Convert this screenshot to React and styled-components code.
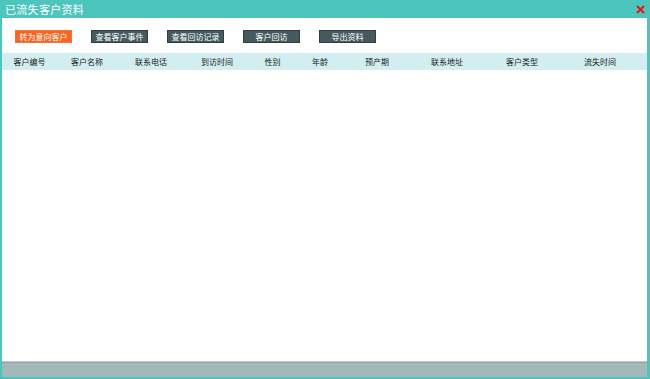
import styled, { createGlobalStyle } from "styled-components"

const GlobalStyle = createGlobalStyle`
  html, body {
    margin: 0;
    padding: 0;
  }
  body {
    font-family: "Noto Sans CJK SC", "Noto Sans", sans-serif;
  }
`

const teal = "#4cc5bd"

const Window = styled.div`
  width: 650px;
  height: 379px;
  box-sizing: border-box;
  background-color: ${teal};
  padding: 0 3px 2px 2px;
  display: flex;
  flex-direction: column;
  overflow: hidden;
`

const TitleBar = styled.div`
  height: 18px;
  display: flex;
  align-items: center;
  justify-content: space-between;
  padding: 0 2px 0 3px;
  flex-shrink: 0;
`

const Title = styled.div`
  color: #fff;
  font-size: 11px;
  letter-spacing: 0.3px;
  line-height: 18px;
`

const Close = styled.div`
  width: 10px;
  height: 10px;
  display: flex;
  align-items: center;
  justify-content: center;
`

const Body = styled.div`
  flex: 1;
  background: #fff;
  display: flex;
  flex-direction: column;
  min-height: 0;
`

const Toolbar = styled.div`
  display: flex;
  gap: 19px;
  padding: 12px 0 0 13px;
  height: 35px;
  box-sizing: border-box;
`

const Button = styled.div`
  width: 57px;
  height: 13px;
  box-sizing: border-box;
  background: ${p => (p.$primary ? "#fa6420" : "#465a5e")};
  border: 1px solid ${p => (p.$primary ? "#f4733a" : "#2f4044")};
  color: #fff;
  font-size: 8px;
  line-height: 11px;
  text-align: center;
  white-space: nowrap;
`

const HeaderRow = styled.div`
  display: grid;
  grid-template-columns: 55px 60px 68px 64px 47px 48px 66px 74px 76px 80px 1fr;
  height: 17px;
  background: #d3eef1;
  align-items: center;
`

const HeaderCell = styled.div`
  font-size: 8px;
  color: #222;
  text-align: center;
  white-space: nowrap;
`

const Rows = styled.div`
  flex: 1;
`

const Footer = styled.div`
  height: 15px;
  flex-shrink: 0;
  background: #a4b7b9;
  border-top: 1px solid #c9c9c9;
  box-shadow: inset 0 1px 0 #8fa2a5;
`

const buttons = ["转为意向客户", "查看客户事件", "查看回访记录", "客户回访", "导出资料"]
const columns = ["客户编号", "客户名称", "联系电话", "到访时间", "性别", "年龄", "预产期", "联系地址", "客户类型", "流失时间"]

export default function App() {
  return (
    <>
      <GlobalStyle />
      <Window>
        <TitleBar>
          <Title>已流失客户资料</Title>
          <Close>
            <svg width="9" height="9" viewBox="0 0 9 9">
              <path d="M1 1L8 8M8 1L1 8" stroke="#e8141b" strokeWidth="2" />
            </svg>
          </Close>
        </TitleBar>
        <Body>
          <Toolbar>
            {buttons.map((b, i) => (
              <Button key={b} $primary={i === 0}>{b}</Button>
            ))}
          </Toolbar>
          <HeaderRow>
            {columns.map(c => (
              <HeaderCell key={c}>{c}</HeaderCell>
            ))}
          </HeaderRow>
          <Rows />
        </Body>
        <Footer />
      </Window>
    </>
  )
}
